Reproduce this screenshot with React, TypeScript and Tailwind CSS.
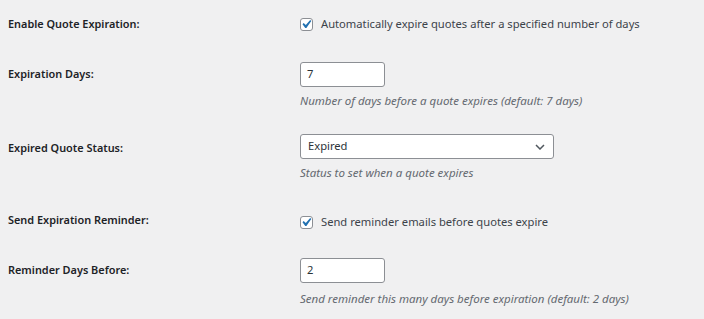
import React from "react";

function Check({ label }: { label: string }) {
  return (
    <label className="flex items-center gap-[8px] text-[11.2px] leading-[16px] text-[#3c434a]">
      <span className="flex h-[13px] w-[13px] items-center justify-center rounded-[3px] border border-[#8c8f94] bg-white">
        <svg viewBox="4 3 13 13" className="h-[12px] w-[12px]">
          <path d="M14.83 4.89l1.34.94-5.81 8.38H9.02L5.78 9.67l1.34-1.25 2.57 2.4z" fill="#2271b1" />
        </svg>
      </span>
      {label}
    </label>
  );
}

function Desc({ children, mt }: { children: React.ReactNode; mt: string }) {
  return <p className={`${mt} text-[11.5px] italic leading-[16px] text-[#646970]`}>{children}</p>;
}

function NumberBox({ value }: { value: string }) {
  return (
    <div className="flex h-[25px] w-[85px] items-center rounded-[3px] border border-[#8c8f94] bg-white px-[6px] text-[11.2px] text-[#2c3338]">
      {value}
    </div>
  );
}

export default function App() {
  return (
    <div className="h-[319px] w-[704px] bg-[#f0f0f1] font-['Noto_Sans',sans-serif] text-[#1d2327]">
      <div className="grid grid-cols-[292px_1fr] px-[8px]">
        {/* enable */}
        <div className="h-[49px] pt-[16px] text-[10.9px] font-semibold leading-[16px]">Enable Quote Expiration:</div>
        <div className="pt-[16px]">
          <Check label="Automatically expire quotes after a specified number of days" />
        </div>

        {/* days */}
        <div className="h-[74px] pt-[17px] text-[10.9px] font-semibold leading-[16px]">Expiration Days:</div>
        <div className="pt-[13px]">
          <NumberBox value="7" />
          <Desc mt="mt-[6px]">Number of days before a quote expires (default: 7 days)</Desc>
        </div>

        {/* status */}
        <div className="h-[74px] pt-[17px] text-[10.9px] font-semibold leading-[16px]">Expired Quote Status:</div>
        <div className="pt-[11px]">
          <div className="flex h-[25px] w-[254px] items-center justify-between rounded-[3px] border border-[#8c8f94] bg-white pl-[7px] pr-[8px] text-[11.2px] text-[#2c3338]">
            <span>Expired</span>
            <svg viewBox="0 0 10 6" className="h-[6px] w-[10px]">
              <path d="M1 1l4 4 4-4" fill="none" stroke="#50575e" strokeWidth="1.5" />
            </svg>
          </div>
          <Desc mt="mt-[6px]">Status to set when a quote expires</Desc>
        </div>

        {/* reminder */}
        <div className="h-[49px] pt-[15px] text-[10.9px] font-semibold leading-[16px]">Send Expiration Reminder:</div>
        <div className="pt-[17px]">
          <Check label="Send reminder emails before quotes expire" />
        </div>

        {/* reminder days */}
        <div className="pt-[16px] text-[10.9px] font-semibold leading-[16px]">Reminder Days Before:</div>
        <div className="pt-[12px]">
          <NumberBox value="2" />
          <Desc mt="mt-[8px]">Send reminder this many days before expiration (default: 2 days)</Desc>
        </div>
      </div>
    </div>
  );
}
